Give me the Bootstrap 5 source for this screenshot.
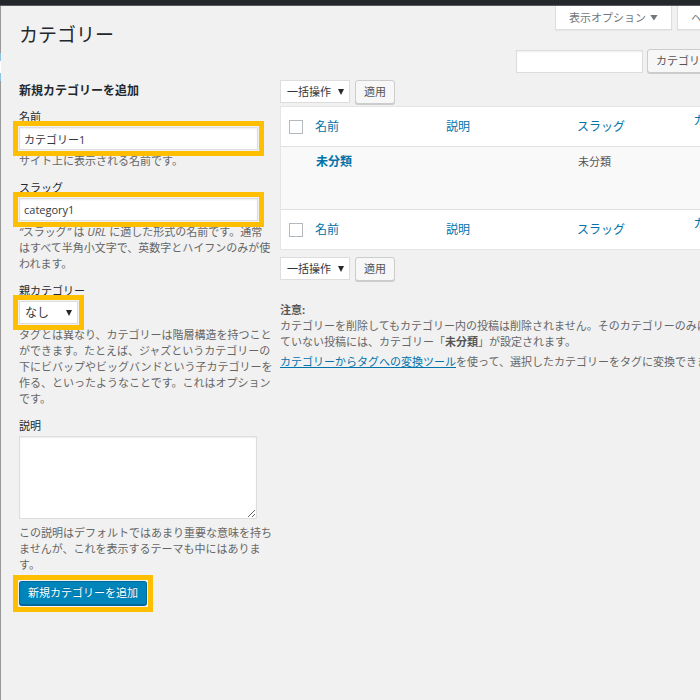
<!DOCTYPE html>
<html lang="ja">
<head>
<meta charset="utf-8">
<meta name="viewport" content="width=device-width, initial-scale=1">
<title>カテゴリー</title>
<link href="https://cdn.jsdelivr.net/npm/bootstrap@5.3.0/dist/css/bootstrap.min.css" rel="stylesheet">
<style>
  body { background: #f1f1f1; color: #444; font-family: "Open Sans", "Noto Sans CJK JP", sans-serif; font-size: 11px; line-height: 16px; }
  .adminbar { height: 5px; background: #23282d; border-bottom: 1px solid #5a5a5e; box-sizing: content-box; }
  .menu-edge { width: 1px; flex: none; background: linear-gradient(#999 47px, #8fc3de 47px 55px, #fff 55px 67px, #8fc3de 67px 75px, #999 75px); }
  .admin-main { overflow: hidden; min-height: calc(100vh - 6px); }
  /* the list side runs on past the right edge of the window */
  .admin-inner { margin-right: -53px; padding-left: 18px; }
  .page-title { font-size: 19px; line-height: 28px; font-weight: 400; color: #23282d; margin: 15px 0 0; }
  .screen-tabs { gap: 5px; padding-right: 3px; }
  .screen-tab { height: 24px; padding: 0 13px; background: #fff; border: 1px solid #ddd; border-top: 0; color: #72777c; font-size: 11px; line-height: 22px; white-space: nowrap; display: flex; align-items: center; gap: 4px; box-shadow: 0 1px 1px rgba(0,0,0,.04); }
  .tri { width: 8px; height: 6px; background: currentColor; clip-path: polygon(0 0, 100% 0, 50% 100%); }
  .search-row { gap: 4px; margin-bottom: 7px; }
  .form-control.wp-field, .form-select.wp-field { height: 23px; min-height: 0; padding: 0 4px; border: 1px solid #ddd; border-radius: 0; background-color: #fff; color: #32373c; font-size: 11px; line-height: 20px; box-shadow: inset 0 1px 2px rgba(0,0,0,.07); }
  .form-control.wp-search { width: 127px; }
  .form-select.wp-field { width: auto; font-size: 12px; padding: 0 16px 0 5px; box-shadow: none; background-image: url("data:image/svg+xml,%3Csvg xmlns='http://www.w3.org/2000/svg' viewBox='0 0 6 6'%3E%3Cpath d='M0 0h6L3 6z' fill='%2323282d'/%3E%3C/svg%3E"); background-size: 6px 6px; background-position: right 5px center; }
  .form-select.wp-bulk { width: 70px; font-size: 11px; padding-left: 6px; }
  .form-select.wp-parent { width: 59px; }
  textarea.form-control.wp-area { height: 83px; width: 238px; }
  .form-control.wp-text { width: 239px; }
  .marked { outline: 5px solid #ffbf00; outline-offset: 1px; position: relative; }
  .btn.wp-btn { height: 24px; padding: 0 8px; font-size: 11px; line-height: 20px; border: 1px solid #ccc; border-radius: 3px; background: #f7f7f7; color: #555; box-shadow: 0 1px 0 #ccc; white-space: nowrap; }
  .btn.wp-primary { display: block; height: 25px; padding: 0 8px; line-height: 22px; background: #0085ba; border-color: #006799; color: #fff; text-shadow: 0 -1px 1px #006799; box-shadow: none; border-bottom-width: 2px; }
  .add-col { width: 261px; flex: none; padding: 3px 7px 0 0; }
  .add-title { font-size: 12px; line-height: 16px; font-weight: 700; color: #23282d; margin: 0 0 10px; }
  .fieldset-item { margin-bottom: 11px; }
  .fieldset-item label { display: block; line-height: 16px; margin-bottom: 2px; color: #23282d; }
  .hint { color: #666; margin: 3px -7px 0 0; }
  .hint-area { margin-top: 6px; }
  .actions-row { gap: 5px; }
  .wp-list { table-layout: fixed; margin: 2px 0 7px; border: 1px solid #e5e5e5; background: #fff; border-collapse: separate; border-spacing: 0; }
  .wp-list th { height: 39px; padding: 0 8px; vertical-align: middle; font-weight: 400; font-size: 12px; line-height: 13px; }
  .wp-list tbody td { height: 64px; padding: 7px 9px; background: #f9f9f9; border-top: 1px solid #e1e1e1; border-bottom: 1px solid #e1e1e1; color: #555; vertical-align: top; }
  .wp-list a, .note a { color: #0073aa; }
  .wp-list a { text-decoration: none; }
  .wp-list .row-title { font-size: 12px; font-weight: 700; }
  .c-check { width: 26px; } .c-name, .c-desc { width: 131px; } .c-slug { width: 102px; }
  .form-check-input.wp-check { display: block; float: none; width: 14px; height: 14px; margin: 0; border: 1px solid #b4b9be; border-radius: 0; }
  .note { margin-top: 21px; color: #555; white-space: nowrap; }
  .note p { margin: 0 0 4px; color: #666; }
  .note strong { color: #555; font-weight: 700; }
</style>
</head>
<body>
<div class="adminbar"></div>
<div class="d-flex">
  <div class="menu-edge"></div>
  <main class="admin-main flex-grow-1">
    <div class="admin-inner">
      <header class="d-flex justify-content-between align-items-start">
        <h1 class="page-title">カテゴリー</h1>
        <div class="screen-tabs d-flex">
          <button type="button" class="screen-tab">表示オプション<span class="tri"></span></button>
          <button type="button" class="screen-tab">ヘルプ<span class="tri"></span></button>
        </div>
      </header>
      <form class="search-row d-flex justify-content-end align-items-center">
        <input type="search" class="form-control wp-field wp-search" aria-label="カテゴリーを検索">
        <button type="button" class="btn wp-btn">カテゴリーを検索</button>
      </form>
      <div class="d-flex align-items-start">
        <form class="add-col">
          <h2 class="add-title">新規カテゴリーを追加</h2>
          <div class="fieldset-item">
            <label for="cat-name">名前</label>
            <input type="text" id="cat-name" class="form-control wp-field wp-text marked" value="カテゴリー1">
            <p class="hint">サイト上に表示される名前です。</p>
          </div>
          <div class="fieldset-item">
            <label for="cat-slug">スラッグ</label>
            <input type="text" id="cat-slug" class="form-control wp-field wp-text marked" value="category1">
            <p class="hint"><em>“</em>スラッグ<em>”</em> は <em>URL</em> に適した形式の名前です。通常<br>はすべて半角小文字で、英数字とハイフンのみが使われます。</p>
          </div>
          <div class="fieldset-item">
            <label for="cat-parent">親カテゴリー</label>
            <select id="cat-parent" class="form-select wp-field wp-parent marked"><option>なし</option></select>
            <p class="hint">タグとは異なり、カテゴリーは階層構造を持つことができます。たとえば、ジャズというカテゴリーの下にビバップやビッグバンドという子カテゴリーを作る、といったようなことです。これはオプションです。</p>
          </div>
          <div class="mb-2">
            <div class="fieldset-item mb-0">
              <label for="cat-desc">説明</label>
              <textarea id="cat-desc" class="form-control wp-field wp-area"></textarea>
              <p class="hint hint-area">この説明はデフォルトではあまり重要な意味を持ちませんが、これを表示するテーマも中にはあります。</p>
            </div>
          </div>
          <div class="marked d-inline-block">
            <button type="button" class="btn wp-btn wp-primary">新規カテゴリーを追加</button>
          </div>
        </form>
        <section class="flex-grow-1">
          <div class="actions-row d-flex">
            <select class="form-select wp-field wp-bulk" aria-label="一括操作"><option>一括操作</option></select>
            <button type="button" class="btn wp-btn">適用</button>
          </div>
          <table class="wp-list w-100">
            <colgroup><col class="c-check"><col class="c-name"><col class="c-desc"><col class="c-slug"><col></colgroup>
            <thead>
              <tr>
                <th><input type="checkbox" class="form-check-input wp-check" aria-label="すべて選択"></th>
                <th><a href="#">名前</a></th><th><a href="#">説明</a></th><th><a href="#">スラッグ</a></th>
                <th class="text-center"><a href="#">カウン<br>ト</a></th>
              </tr>
            </thead>
            <tbody>
              <tr><td></td><td><a href="#" class="row-title">未分類</a></td><td></td><td>未分類</td><td></td></tr>
            </tbody>
            <tfoot>
              <tr>
                <th><input type="checkbox" class="form-check-input wp-check" aria-label="すべて選択"></th>
                <th><a href="#">名前</a></th><th><a href="#">説明</a></th><th><a href="#">スラッグ</a></th>
                <th class="text-center"><a href="#">カウン<br>ト</a></th>
              </tr>
            </tfoot>
          </table>
          <div class="actions-row d-flex">
            <select class="form-select wp-field wp-bulk" aria-label="一括操作"><option>一括操作</option></select>
            <button type="button" class="btn wp-btn">適用</button>
          </div>
          <div class="note">
            <p><strong>注意:</strong><br>カテゴリーを削除してもカテゴリー内の投稿は削除されません。そのカテゴリーのみに<br>ていない投稿には、カテゴリー「<strong>未分類</strong>」が設定されます。</p>
            <p><a href="#">カテゴリーからタグへの変換ツール</a>を使って、選択したカテゴリーをタグに変換できます。</p>
          </div>
        </section>
      </div>
    </div>
  </main>
</div>
<script src="https://cdn.jsdelivr.net/npm/bootstrap@5.3.0/dist/js/bootstrap.bundle.min.js"></script>
</body>
</html>
